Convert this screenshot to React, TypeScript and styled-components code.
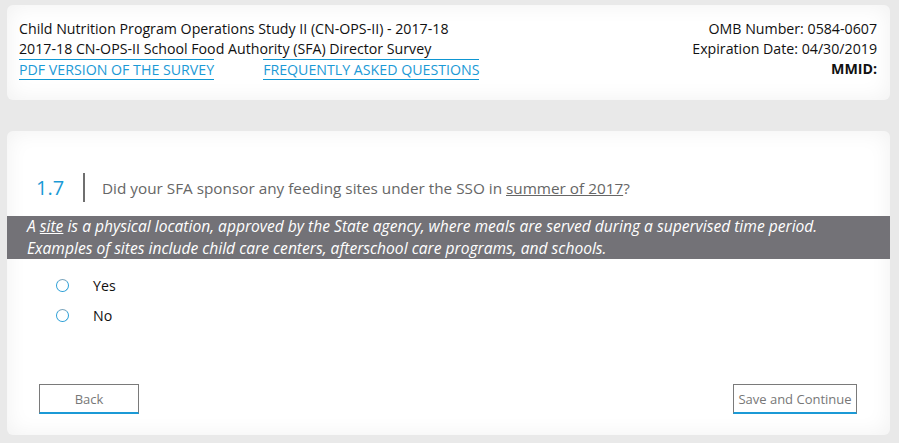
import React from "react";
import styled, { createGlobalStyle } from "styled-components";

const Global = createGlobalStyle`
  html, body { margin: 0; padding: 0; background: #e9e9e9; }
  body { font-family: "Open Sans", "Noto Sans", sans-serif; }
`;

const Page = styled.div`
  padding: 5px 9px 8px 7px;
  display: flex;
  flex-direction: column;
  gap: 31px;
`;

const Card = styled.div`
  background: #fff;
  border-radius: 6px;
  box-shadow: inset 0 0 22px rgba(0, 0, 0, 0.06);
`;

const HeaderCard = styled(Card)`
  height: 95px;
  box-sizing: border-box;
  padding: 14px 13px 0 12px;
  display: flex;
  justify-content: space-between;
  font-size: 14.2px;
  line-height: 20px;
  color: #111;
`;

const HeaderLeft = styled.div`
  display: flex;
  flex-direction: column;
`;

const HeaderRight = styled.div`
  display: flex;
  flex-direction: column;
  align-items: flex-end;
`;

const Links = styled.div`
  display: flex;
  gap: 49px;
`;

const TopLink = styled.a`
  color: #1b9ad6;
  text-decoration: none;
  border-top: 1px solid #0e96d2;
  border-bottom: 1px solid #0e96d2;
  line-height: 19px;
  cursor: pointer;
`;

const Bold = styled.span`
  font-weight: 700;
`;

const MainCard = styled(Card)`
  height: 304px;
  box-sizing: border-box;
  padding-top: 42px;
  display: flex;
  flex-direction: column;
`;

const QuestionRow = styled.div`
  display: flex;
  align-items: center;
  padding-left: 29px;
  height: 29px;
`;

const QNum = styled.span`
  color: #1b9ad6;
  font-size: 20px;
  width: 47px;
`;

const Divider = styled.span`
  width: 2px;
  height: 29px;
  background: #6f6f6f;
  margin-right: 17px;
`;

const QText = styled.span`
  color: #666;
  font-size: 15.3px;
`;

const Under = styled.span`
  text-decoration: underline;
`;

const Band = styled.div`
  margin-top: 14px;
  background: #737277;
  color: #fff;
  font-style: italic;
  font-size: 15.6px;
  padding: 0 20px;
  white-space: nowrap;
`;

const BandLine = styled.div`
  line-height: 21.5px;
`;

const Options = styled.div`
  display: flex;
  flex-direction: column;
  gap: 10px;
  margin-top: 16px;
  padding-left: 49px;
`;

const Option = styled.label`
  display: flex;
  align-items: center;
  height: 20px;
  font-size: 14.2px;
  color: #111;
`;

const Radio = styled.span`
  width: 11px;
  height: 11px;
  border-radius: 50%;
  border: 1px solid #2a9ed6;
  border-top-color: #7aa5bd;
  margin-right: 24px;
`;

const Footer = styled.div`
  margin-top: auto;
  margin-bottom: 21px;
  display: flex;
  justify-content: space-between;
  padding: 0 33px 0 32px;
`;

const Button = styled.button<{ $w: number }>`
  height: 30px;
  width: ${(p) => p.$w}px;
  background: #fff;
  border: 1px solid #7a7a7a;
  border-bottom: 2px solid #1b9ad6;
  color: #777;
  font-family: inherit;
  font-size: 13px;
  padding: 0;
  cursor: pointer;
`;

export default function App() {
  return (
    <>
      <Global />
      <Page>
        <HeaderCard>
          <HeaderLeft>
            <span>Child Nutrition Program Operations Study II (CN-OPS-II) - 2017-18</span>
            <span>2017-18 CN-OPS-II School Food Authority (SFA) Director Survey</span>
            <Links>
              <TopLink>PDF VERSION OF THE SURVEY</TopLink>
              <TopLink>FREQUENTLY ASKED QUESTIONS</TopLink>
            </Links>
          </HeaderLeft>
          <HeaderRight>
            <span>OMB Number: 0584-0607</span>
            <span>Expiration Date: 04/30/2019</span>
            <Bold>MMID:</Bold>
          </HeaderRight>
        </HeaderCard>
        <MainCard>
          <QuestionRow>
            <QNum>1.7</QNum>
            <Divider />
            <QText>
              Did your SFA sponsor any feeding sites under the SSO in <Under>summer of 2017</Under>?
            </QText>
          </QuestionRow>
          <Band>
            <BandLine>
              A <Under>site</Under> is a physical location, approved by the State agency, where meals are served during a supervised time period.
            </BandLine>
            <BandLine>
              Examples of sites include child care centers, afterschool care programs, and schools.
            </BandLine>
          </Band>
          <Options>
            <Option>
              <Radio />
              Yes
            </Option>
            <Option>
              <Radio />
              No
            </Option>
          </Options>
          <Footer>
            <Button $w={100}>Back</Button>
            <Button $w={124}>Save and Continue</Button>
          </Footer>
        </MainCard>
      </Page>
    </>
  );
}
